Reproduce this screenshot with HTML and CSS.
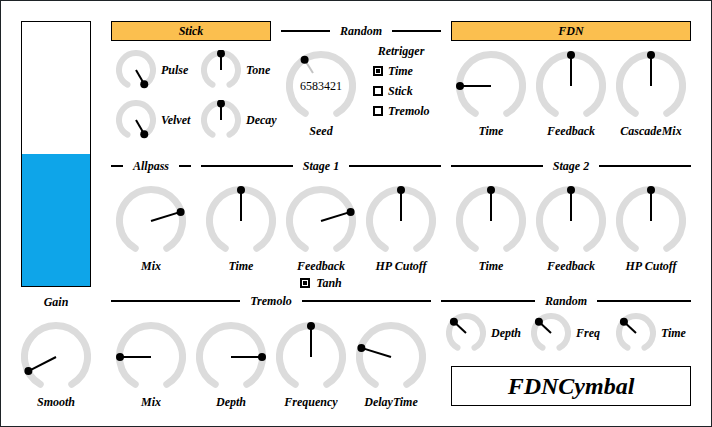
FILE: index.html
```html
<!DOCTYPE html>
<html>
<head>
<meta charset="utf-8">
<link rel="stylesheet" href="styles.css">
</head>
<body>
<div class="app">
  <div class="left">
    <div class="gain-meter"><div class="gain-fill"></div></div>
    <div class="label gain-label">Gain</div>
    <div class="kcell kcell-left">
      <svg class="knob-lg" viewBox="0 0 70 70" width="70" height="70"><path class="arc" d="M19.25 62.28A31.5 31.5 0 1 1 50.75 62.28"/><line class="ptr" x1="35" y1="35" x2="7.4" y2="49.1"/><circle class="dot" cx="7.4" cy="49.1" r="4"/></svg>
      <div class="label">Smooth</div>
    </div>
  </div>

  <div class="right">
    <div class="row row1">
      <div class="group w160">
        <div class="tag">Stick</div>
        <div class="small-grid">
          <div class="sknob">
            <svg class="knob-sm" viewBox="0 0 40 40" width="40" height="40"><path class="arc sm" d="M11.5 34.72A17 17 0 1 1 28.5 34.72"/><line class="ptr" x1="20" y1="20" x2="28.25" y2="34.29"/><circle class="dot" cx="28.25" cy="34.29" r="4"/></svg>
            <span>Pulse</span>
          </div>
          <div class="sknob">
            <svg class="knob-sm" viewBox="0 0 40 40" width="40" height="40"><path class="arc sm" d="M11.5 34.72A17 17 0 1 1 28.5 34.72"/><line class="ptr" x1="20" y1="20" x2="20" y2="3.5"/><circle class="dot" cx="20" cy="3.5" r="4"/></svg>
            <span>Tone</span>
          </div>
          <div class="sknob">
            <svg class="knob-sm" viewBox="0 0 40 40" width="40" height="40"><path class="arc sm" d="M11.5 34.72A17 17 0 1 1 28.5 34.72"/><line class="ptr" x1="20" y1="20" x2="28.25" y2="34.29"/><circle class="dot" cx="28.25" cy="34.29" r="4"/></svg>
            <span>Velvet</span>
          </div>
          <div class="sknob">
            <svg class="knob-sm" viewBox="0 0 40 40" width="40" height="40"><path class="arc sm" d="M11.5 34.72A17 17 0 1 1 28.5 34.72"/><line class="ptr" x1="20" y1="20" x2="20" y2="3.5"/><circle class="dot" cx="20" cy="3.5" r="4"/></svg>
            <span>Decay</span>
          </div>
        </div>
      </div>

      <div class="group w160">
        <div class="rule"><span>Random</span></div>
        <div class="flexrow">
          <div class="kcell">
            <div class="seed-wrap">
              <svg class="knob-lg" viewBox="0 0 70 70" width="70" height="70"><path class="arc" d="M19.25 62.28A31.5 31.5 0 1 1 50.75 62.28"/><line class="ptr faint" x1="27" y1="22" x2="18.6" y2="8.7"/><circle class="dot" cx="18.6" cy="8.7" r="4"/></svg>
              <div class="seed-num">6583421</div>
            </div>
            <div class="label">Seed</div>
          </div>
          <div class="retrig">
            <div class="retrig-title">Retrigger</div>
            <div class="cb-row"><span class="cb on"></span><span>Time</span></div>
            <div class="cb-row"><span class="cb"></span><span>Stick</span></div>
            <div class="cb-row"><span class="cb"></span><span>Tremolo</span></div>
          </div>
        </div>
      </div>

      <div class="group w240">
        <div class="tag">FDN</div>
        <div class="flexrow">
          <div class="kcell">
            <svg class="knob-lg" viewBox="0 0 70 70" width="70" height="70"><path class="arc" d="M19.25 62.28A31.5 31.5 0 1 1 50.75 62.28"/><line class="ptr" x1="35" y1="35" x2="4" y2="35"/><circle class="dot" cx="4" cy="35" r="4"/></svg>
            <div class="label">Time</div>
          </div>
          <div class="kcell">
            <svg class="knob-lg" viewBox="0 0 70 70" width="70" height="70"><path class="arc" d="M19.25 62.28A31.5 31.5 0 1 1 50.75 62.28"/><line class="ptr" x1="35" y1="35" x2="35" y2="4"/><circle class="dot" cx="35" cy="4" r="4"/></svg>
            <div class="label">Feedback</div>
          </div>
          <div class="kcell">
            <svg class="knob-lg" viewBox="0 0 70 70" width="70" height="70"><path class="arc" d="M19.25 62.28A31.5 31.5 0 1 1 50.75 62.28"/><line class="ptr" x1="35" y1="35" x2="35" y2="4"/><circle class="dot" cx="35" cy="4" r="4"/></svg>
            <div class="label">CascadeMix</div>
          </div>
        </div>
      </div>
    </div>

    <div class="row row2">
      <div class="group w80">
        <div class="rule"><span>Allpass</span></div>
        <div class="flexrow">
          <div class="kcell">
            <svg class="knob-lg" viewBox="0 0 70 70" width="70" height="70"><path class="arc" d="M19.25 62.28A31.5 31.5 0 1 1 50.75 62.28"/><line class="ptr" x1="35" y1="35" x2="64.6" y2="25.9"/><circle class="dot" cx="64.6" cy="25.9" r="4"/></svg>
            <div class="label">Mix</div>
          </div>
        </div>
      </div>
      <div class="group w240">
        <div class="rule"><span>Stage 1</span></div>
        <div class="flexrow">
          <div class="kcell">
            <svg class="knob-lg" viewBox="0 0 70 70" width="70" height="70"><path class="arc" d="M19.25 62.28A31.5 31.5 0 1 1 50.75 62.28"/><line class="ptr" x1="35" y1="35" x2="35" y2="4"/><circle class="dot" cx="35" cy="4" r="4"/></svg>
            <div class="label">Time</div>
          </div>
          <div class="kcell">
            <svg class="knob-lg" viewBox="0 0 70 70" width="70" height="70"><path class="arc" d="M19.25 62.28A31.5 31.5 0 1 1 50.75 62.28"/><line class="ptr" x1="35" y1="35" x2="64.6" y2="25.9"/><circle class="dot" cx="64.6" cy="25.9" r="4"/></svg>
            <div class="label">Feedback</div>
            <div class="cb-row tanh"><span class="cb on"></span><span>Tanh</span></div>
          </div>
          <div class="kcell">
            <svg class="knob-lg" viewBox="0 0 70 70" width="70" height="70"><path class="arc" d="M19.25 62.28A31.5 31.5 0 1 1 50.75 62.28"/><line class="ptr" x1="35" y1="35" x2="35" y2="4"/><circle class="dot" cx="35" cy="4" r="4"/></svg>
            <div class="label">HP Cutoff</div>
          </div>
        </div>
      </div>
      <div class="group w240">
        <div class="rule"><span>Stage 2</span></div>
        <div class="flexrow">
          <div class="kcell">
            <svg class="knob-lg" viewBox="0 0 70 70" width="70" height="70"><path class="arc" d="M19.25 62.28A31.5 31.5 0 1 1 50.75 62.28"/><line class="ptr" x1="35" y1="35" x2="35" y2="4"/><circle class="dot" cx="35" cy="4" r="4"/></svg>
            <div class="label">Time</div>
          </div>
          <div class="kcell">
            <svg class="knob-lg" viewBox="0 0 70 70" width="70" height="70"><path class="arc" d="M19.25 62.28A31.5 31.5 0 1 1 50.75 62.28"/><line class="ptr" x1="35" y1="35" x2="35" y2="4"/><circle class="dot" cx="35" cy="4" r="4"/></svg>
            <div class="label">Feedback</div>
          </div>
          <div class="kcell">
            <svg class="knob-lg" viewBox="0 0 70 70" width="70" height="70"><path class="arc" d="M19.25 62.28A31.5 31.5 0 1 1 50.75 62.28"/><line class="ptr" x1="35" y1="35" x2="35" y2="4"/><circle class="dot" cx="35" cy="4" r="4"/></svg>
            <div class="label">HP Cutoff</div>
          </div>
        </div>
      </div>
    </div>

    <div class="row row3">
      <div class="group w320">
        <div class="rule"><span>Tremolo</span></div>
        <div class="flexrow trem">
          <div class="kcell">
            <svg class="knob-lg" viewBox="0 0 70 70" width="70" height="70"><path class="arc" d="M19.25 62.28A31.5 31.5 0 1 1 50.75 62.28"/><line class="ptr" x1="35" y1="35" x2="4" y2="35"/><circle class="dot" cx="4" cy="35" r="4"/></svg>
            <div class="label">Mix</div>
          </div>
          <div class="kcell">
            <svg class="knob-lg" viewBox="0 0 70 70" width="70" height="70"><path class="arc" d="M19.25 62.28A31.5 31.5 0 1 1 50.75 62.28"/><line class="ptr" x1="35" y1="35" x2="66" y2="35"/><circle class="dot" cx="66" cy="35" r="4"/></svg>
            <div class="label">Depth</div>
          </div>
          <div class="kcell">
            <svg class="knob-lg" viewBox="0 0 70 70" width="70" height="70"><path class="arc" d="M19.25 62.28A31.5 31.5 0 1 1 50.75 62.28"/><line class="ptr" x1="35" y1="35" x2="35" y2="4"/><circle class="dot" cx="35" cy="4" r="4"/></svg>
            <div class="label">Frequency</div>
          </div>
          <div class="kcell">
            <svg class="knob-lg" viewBox="0 0 70 70" width="70" height="70"><path class="arc" d="M19.25 62.28A31.5 31.5 0 1 1 50.75 62.28"/><line class="ptr" x1="35" y1="35" x2="5.4" y2="25.9"/><circle class="dot" cx="5.4" cy="25.9" r="4"/></svg>
            <div class="label">DelayTime</div>
          </div>
        </div>
      </div>
      <div class="group w250">
        <div class="rule"><span>Random</span></div>
        <div class="rand-row">
          <div class="sknob">
            <svg class="knob-sm" viewBox="0 0 40 40" width="40" height="40"><path class="arc sm" d="M11.5 34.72A17 17 0 1 1 28.5 34.72"/><line class="ptr" x1="20" y1="20" x2="7.9" y2="8.7"/><circle class="dot" cx="7.9" cy="8.7" r="4"/></svg>
            <span>Depth</span>
          </div>
          <div class="sknob">
            <svg class="knob-sm" viewBox="0 0 40 40" width="40" height="40"><path class="arc sm" d="M11.5 34.72A17 17 0 1 1 28.5 34.72"/><line class="ptr" x1="20" y1="20" x2="7.9" y2="8.7"/><circle class="dot" cx="7.9" cy="8.7" r="4"/></svg>
            <span>Freq</span>
          </div>
          <div class="sknob">
            <svg class="knob-sm" viewBox="0 0 40 40" width="40" height="40"><path class="arc sm" d="M11.5 34.72A17 17 0 1 1 28.5 34.72"/><line class="ptr" x1="20" y1="20" x2="7.9" y2="8.7"/><circle class="dot" cx="7.9" cy="8.7" r="4"/></svg>
            <span>Time</span>
          </div>
        </div>
        <div class="title-box">FDNCymbal</div>
      </div>
    </div>
  </div>
</div>
</body>
</html>
```

FILE: styles.css
```css
* { box-sizing: border-box; margin: 0; padding: 0; }
body {
  margin: 0;
  background: #fff;
  font-family: "Liberation Serif", "Times New Roman", serif;
  font-style: italic;
  font-weight: bold;
  font-size: 12px;
  color: #000;
}
.app {
  width: 712px;
  height: 427px;
  border: 1px solid #1e2327;
  padding: 20px;
  display: flex;
  gap: 20px;
  overflow: hidden;
}
.left {
  width: 70px;
  flex-shrink: 0;
  display: flex;
  flex-direction: column;
  align-items: center;
}
.left > *, .right > *, .group > *, .kcell > *, .sknob > *, .retrig > * { flex-shrink: 0; }
.gain-meter {
  width: 70px;
  height: 266px;
  border: 1px solid #000;
  display: flex;
  flex-direction: column;
  justify-content: flex-end;
}
.gain-fill { height: 50%; background: #0ea5e9; }
.label { height: 20px; line-height: 20px; text-align: center; white-space: nowrap; }
.gain-label { margin-top: 5px; }
.right { width: 580px; flex-shrink: 0; display: flex; flex-direction: column; }
.row { display: flex; gap: 10px; align-items: flex-start; }
.row1 { height: 120px; }
.row2 { height: 135px; margin-top: 15px; }
.row3 { height: 121px; }
.group { display: flex; flex-direction: column; flex-shrink: 0; }
.w80 { width: 80px; }
.w160 { width: 160px; }
.w240 { width: 240px; }
.w250 { width: 250px; }
.w320 { width: 320px; }
.tag {
  height: 20px;
  line-height: 18px;
  text-align: center;
  background: #fbbf4f;
  border: 1px solid #000;
}
.rule {
  height: 20px;
  display: flex;
  align-items: center;
}
.rule::before, .rule::after {
  content: "";
  flex: 1;
  height: 2px;
  background: #000;
}
.rule span { padding: 0 10px; line-height: 20px; }
.flexrow { display: flex; }
.kcell {
  width: 80px;
  flex-shrink: 0;
  display: flex;
  flex-direction: column;
  align-items: center;
}
.kcell > svg, .seed-wrap { margin-top: 10px; }
.kcell-left { width: 70px; }
.trem .kcell > svg { margin-top: 11px; }
.knob-lg, .knob-sm { display: block; flex-shrink: 0; }
.arc { fill: none; stroke: #dcdcdc; stroke-width: 7; stroke-linecap: round; }
.arc.sm { stroke-width: 6; }
.ptr { stroke: #000; stroke-width: 2; }
.ptr.faint { stroke: #c4c4c4; }
.dot { fill: #000; }
.small-grid {
  margin-top: 9px;
  display: grid;
  grid-template-columns: 85px 75px;
  grid-auto-rows: 40px;
  row-gap: 10px;
}
.sknob {
  display: flex;
  align-items: center;
  gap: 5px;
  padding-left: 5px;
  white-space: nowrap;
}
.seed-wrap {
  position: relative;
  width: 70px;
  height: 70px;
}
.seed-num {
  position: absolute;
  left: 0;
  right: 0;
  top: 27px;
  line-height: 16px;
  text-align: center;
  font-style: normal;
  font-weight: normal;
}
.retrig { width: 80px; display: flex; flex-direction: column; }
.retrig-title { height: 20px; line-height: 20px; text-align: center; }
.cb-row {
  height: 20px;
  display: flex;
  align-items: center;
  gap: 5px;
  padding-left: 12px;
  white-space: nowrap;
}
.cb {
  width: 10px;
  height: 10px;
  flex-shrink: 0;
  border: 2px solid #000;
  background: #fff;
  display: flex;
  align-items: center;
  justify-content: center;
}
.cb.on::after {
  content: "";
  width: 4px;
  height: 4px;
  background: #000;
}
.cb-row.tanh { height: 14px; padding-left: 0; gap: 6px; justify-content: center; }
.rand-row {
  margin-top: 2px;
  display: flex;
  gap: 5px;
}
.rand-row .sknob { width: 80px; }
.title-box {
  margin-top: 13px;
  margin-left: 10px;
  width: 240px;
  height: 40px;
  border: 1px solid #000;
  text-align: center;
  line-height: 38px;
  font-size: 24px;
}
```
